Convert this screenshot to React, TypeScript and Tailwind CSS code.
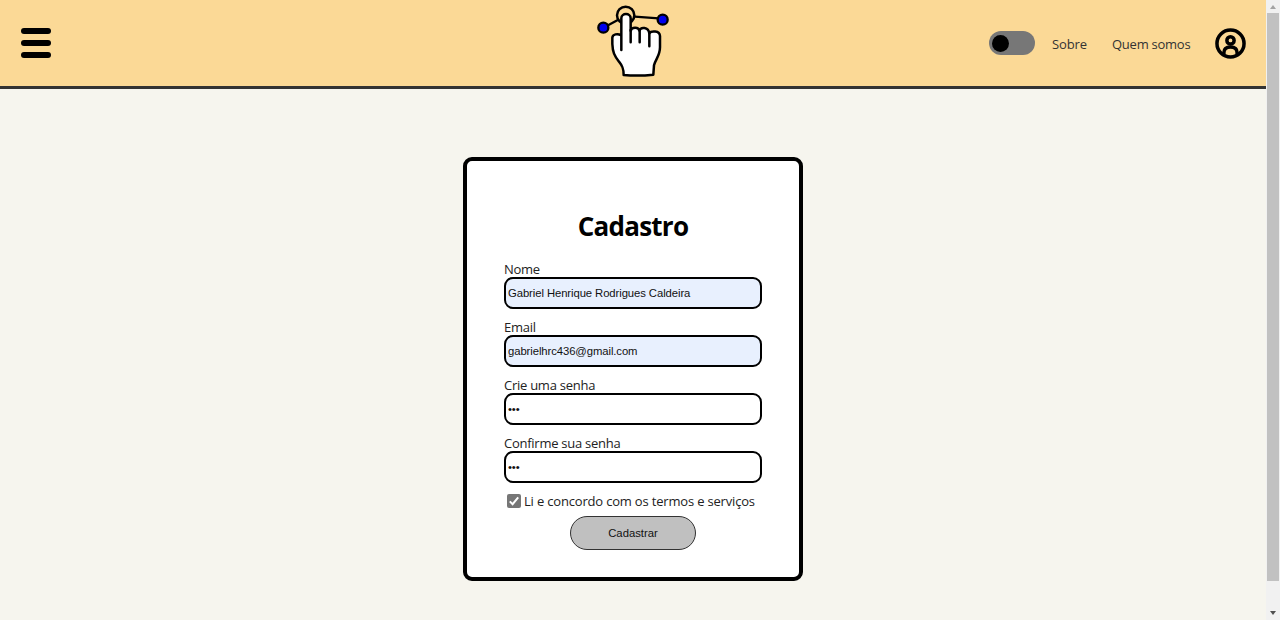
import React from "react";

function Logo() {
  return (
    <svg width="106" height="86" viewBox="0 0 318 258" fill="none" stroke="#000" strokeLinecap="round" strokeLinejoin="round">
      <path d="M80 78 L112 61 M164 50 L236 55" strokeWidth="7" />
      <circle cx="137" cy="46" r="26" strokeWidth="7.5" />
      <circle cx="70" cy="83" r="15" fill="#0000ee" strokeWidth="7" />
      <circle cx="248" cy="59" r="15" fill="#0000ee" strokeWidth="7" />
      <path
        d="M124 150 V55 C124 38 152 38 152 55 V92 C155 80 176 80 178 92 C182 80 205 80 208 100 C213 92 239 91 240 108 V142 C240 168 226 178 222 196 L220 224 Q175 229 131 225 C131 205 127 197 117 185 C103 167 98 156 97 132 V113 C98 103 112 99 124 106 Z"
        fill="#fff"
        strokeWidth="7.5"
      />
      <path d="M152 90 V127 M179 90 V127 M208 98 V139" strokeWidth="7.5" />
    </svg>
  );
}

function UserIcon() {
  return (
    <svg width="31" height="31" viewBox="0 0 30 30" fill="none" stroke="#000" strokeWidth="3.4">
      <circle cx="15" cy="15" r="13.1" />
      <circle cx="15" cy="12" r="3.5" />
      <path d="M8.6 25.5 V24 C8.6 20.5 11 18.4 15 18.4 C19 18.4 21.4 20.5 21.4 24 V25.5" />
    </svg>
  );
}

function Header() {
  return (
    <header className="grid h-[89px] grid-cols-[1fr_106px_1fr] border-b-[3px] border-[#333] bg-[#fbd996]">
      <div className="flex flex-col gap-[6px] pt-7 pl-[20.5px]">
        <span className="h-[6px] w-[30px] rounded-full bg-black" />
        <span className="h-[6px] w-[30px] rounded-full bg-black" />
        <span className="h-[6px] w-[30px] rounded-full bg-black" />
      </div>
      <Logo />
      <nav className="flex items-center justify-end pr-5 text-[13px] text-[#333]">
        <div className="flex h-6 w-[46px] items-center rounded-full bg-[#777] pl-[3px]">
          <span className="h-[17px] w-[17px] rounded-full bg-black" />
        </div>
        <a className="ml-[17px] w-[60px] pt-[3px] tracking-[-0.1px]">Sobre</a>
        <a className="w-[103px] pt-[3px] tracking-[-0.25px]">Quem somos</a>
        <UserIcon />
      </nav>
    </header>
  );
}

function Field({ label, value, type, fill }: { label: string; value: string; type: string; fill: string }) {
  return (
    <label className="block h-[58px] text-[13px] leading-[19px] text-[#222]">
      <span className="block h-[17px] tracking-[-0.26px] whitespace-nowrap">{label}</span>
      <input
        type={type}
        defaultValue={value}
        className={`block h-8 w-[258px] rounded-[9px] border-2 border-black px-[2px] font-['Liberation_Sans',sans-serif] text-[11.3px] tracking-[-0.085px] text-[#111] ${fill}`}
      />
    </label>
  );
}

function Scrollbar() {
  return (
    <div className="flex h-full w-[14px] flex-col items-center bg-[#f1f1f1]">
      <div className="flex h-[13px] items-center">
        <svg width="6" height="4" viewBox="0 0 6 4"><path d="M0 4 L3 0 L6 4 Z" fill="#a3a3a3" /></svg>
      </div>
      <div className="h-[568px] w-3 bg-[#c1c1c1]" />
      <div className="flex grow items-end pb-[5px]">
        <svg width="6" height="4" viewBox="0 0 6 4"><path d="M0 0 L3 4 L6 0 Z" fill="#505050" /></svg>
      </div>
    </div>
  );
}

export default function App() {
  return (
    <div className="flex h-[620px] w-[1280px] overflow-hidden bg-[#f6f5ee] font-['Open_Sans','Noto_Sans',sans-serif]">
      <div className="grow">
        <Header />
        <main className="flex justify-center pt-[68px]">
          <form className="flex h-[424px] w-[340px] flex-col items-center rounded-[9px] border-4 border-black bg-white">
            <h1 className="mt-[46px] h-[53px] text-[26px] leading-[38px] font-bold tracking-[-0.75px] text-black">Cadastro</h1>
            <div className="w-[258px]">
              <Field label="Nome" value="Gabriel Henrique Rodrigues Caldeira" type="text" fill="bg-[#e8f0fe]" />
              <Field label="Email" value="gabrielhrc436@gmail.com" type="text" fill="bg-[#e8f0fe]" />
              <Field label="Crie uma senha" value="123" type="password" fill="bg-white" />
              <Field label="Confirme sua senha" value="123" type="password" fill="bg-white" />
            </div>
            <label className="flex h-[18px] w-[252px] items-center text-[13px] text-[#222]">
              <svg className="mr-[3px] shrink-0" width="14" height="14" viewBox="0 0 14 14">
                <rect width="14" height="14" rx="2" fill="#767676" />
                <path d="M2.8 7.4 L5.6 10.2 L11.2 3.4" fill="none" stroke="#fff" strokeWidth="2" />
              </svg>
              <span className="pt-[2px] tracking-[-0.18px] whitespace-nowrap">Li e concordo com os termos e serviços</span>
            </label>
            <button type="button" className="mt-[6px] h-[34px] w-[126px] rounded-full border border-[#333] bg-[#c0c0c0] font-['Liberation_Sans',sans-serif] text-[11.3px] text-[#111]">
              Cadastrar
            </button>
          </form>
        </main>
      </div>
      <Scrollbar />
    </div>
  );
}
